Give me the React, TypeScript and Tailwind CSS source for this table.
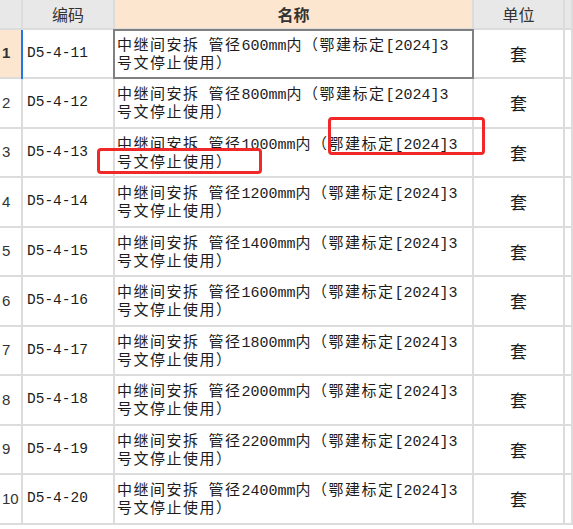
const sizes = [600, 800, 1000, 1200, 1400, 1600, 1800, 2000, 2200, 2400];

const rows = sizes.map((mm, i) => ({
  no: i + 1,
  code: `D5-4-${11 + i}`,
  line1: `中继间安拆 管径${mm}mm内（鄂建标定[2024]3`,
  line2: "号文停止使用）",
  unit: "套",
}));

// SimSun look: half-width chars on a mono grid, full-width chars a little wider
function Mixed({ text }: { text: string }) {
  const parts = text.match(/[\x00-\x7f]+|[^\x00-\x7f]+/g) || [];
  return (
    <>
      {parts.map((p, i) =>
        /^[\x00-\x7f]/.test(p) ? (
          <span key={i} className="font-['Liberation_Mono',monospace] text-[15px] whitespace-pre">
            {p}
          </span>
        ) : (
          <span key={i} className="font-['Noto_Sans_CJK_SC',sans-serif] text-[15px] tracking-[1.5px]">
            {p}
          </span>
        )
      )}
    </>
  );
}

const cell = "border-r-2 border-b-2 border-[#dcdcdc]";

export default function App() {
  return (
    <div className="relative w-[573px] h-[529px] overflow-hidden bg-white text-[#1c1c1c] font-['Noto_Sans_CJK_SC',sans-serif]">
      <div className="grid grid-cols-[23px_92px_359px_91px_1fr]">
        {/* header */}
        <div className={`${cell} h-[30px] bg-[#e8e8e8]`} />
        <div className={`${cell} h-[30px] bg-[#e8e8e8] flex items-center justify-center text-[16px] text-[#333]`}>编码</div>
        <div className={`${cell} h-[30px] bg-[#fde6d0] flex items-center justify-center text-[16px] font-bold text-[#333]`}>名称</div>
        <div className={`${cell} h-[30px] bg-[#e8e8e8] flex items-center justify-center text-[16px] text-[#333]`}>单位</div>
        <div className={`${cell} h-[30px] bg-[#e8e8e8]`} />

        {rows.map((r, i) => {
          const h = i % 2 === 0 ? "h-[49px]" : "h-[50px]";
          const first = i === 0;
          return (
            <div key={r.code} className="contents">
              <div
                className={`${cell} ${h} flex items-center pl-[2px] font-['Liberation_Sans',sans-serif] text-[15px] text-[#333] ${
                  first ? "bg-[#fde6d0] font-bold" : ""
                }`}
              >
                {r.no}
              </div>
              <div className={`${cell} ${h} relative flex items-center pl-[4px] font-['Liberation_Mono',monospace] text-[14.5px]`}>
                {first && <div className="absolute -left-[2px] top-0 bottom-[-2px] w-[2px] bg-[#1e78e6]" />}
                {r.code}
              </div>
              <div className={`${cell} ${h} relative pl-[2px] pt-[4px]`}>
                {first && <div className="absolute -left-[2px] -top-[1px] right-[-2px] bottom-[-2px] border-2 border-[#808080]" />}
                <div className="h-[18px] leading-[18px] whitespace-nowrap">
                  <Mixed text={r.line1} />
                </div>
                <div className="h-[18px] leading-[18px] whitespace-nowrap">
                  <Mixed text={r.line2} />
                </div>
              </div>
              <div className={`${cell} ${h} flex items-center justify-center text-[17px]`}>{r.unit}</div>
              <div className={`${cell} ${h}`} />
            </div>
          );
        })}
      </div>

      {/* annotation boxes */}
      <div className="absolute left-[97px] top-[148px] w-[165px] h-[26px] border-[3px] border-[#f02828] rounded-[4px]" />
      <div className="absolute left-[328px] top-[117px] w-[157px] h-[38px] border-[3px] border-[#f02828] rounded-[4px]" />
    </div>
  );
}
